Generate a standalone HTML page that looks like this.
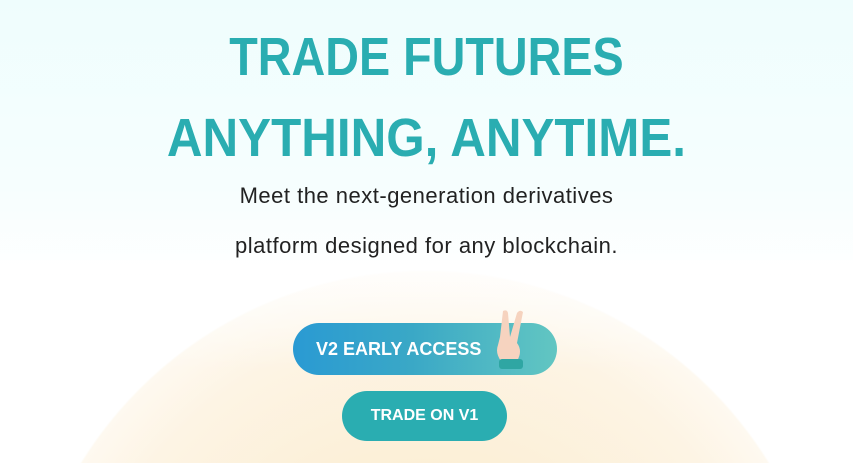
<!DOCTYPE html>
<html><head><style>
html,body{margin:0;padding:0;width:853px;height:463px;overflow:hidden;font-family:"Liberation Sans",sans-serif;}
.wrap{position:relative;width:853px;height:463px;overflow:hidden;background:linear-gradient(#effdfd 0%,#f6fefe 40%,#ffffff 60%);}
.planet{position:absolute;left:0;top:270px;width:853px;height:193px;
background:radial-gradient(circle 405px at 425px 405px,#fbeacb 0%,#fcefd6 50%,#fdf4e4 85%,#fef9f0 99.5%,rgba(255,255,255,0) 100%);}
.fade{position:absolute;left:0;top:260px;width:853px;height:110px;background:linear-gradient(rgba(255,255,255,0.85),rgba(255,255,255,0));}
h1{position:absolute;left:0;width:853px;margin:0;text-align:center;color:#2aadb1;font-weight:bold;font-size:54px;transform:scaleX(0.865);transform-origin:426px 0;}
p{position:absolute;left:0;width:853px;margin:0;text-align:center;color:#222;font-size:22px;letter-spacing:0.5px;}
.v2{position:absolute;left:293px;top:323px;width:264px;height:52px;border-radius:26px;
background:linear-gradient(90deg,#2a9ad3,#3aa8c6 45%,#62c6c2 100%);color:#fff;font-weight:bold;font-size:18px;}
.v2 span{position:absolute;left:23px;top:16px;}
.v1{position:absolute;left:342px;top:391px;width:165px;height:50px;border-radius:25px;background:#2aadb1;color:#fff;font-weight:bold;font-size:16px;text-align:center;line-height:50px;}
</style></head><body><div class="wrap">
<div class="planet"></div>
<div class="fade"></div>
<h1 style="top:26px">TRADE FUTURES</h1>
<h1 style="top:107px;transform:scaleX(0.914)">ANYTHING, ANYTIME.</h1>
<p style="top:183px">Meet the next-generation derivatives</p>
<p style="top:233px">platform designed for any blockchain.</p>
<div class="v2"><span>V2 EARLY ACCESS</span>
<svg style="position:absolute;left:200px;top:-16px" width="40" height="68" viewBox="0 0 40 68">
<path d="M10 4 Q14 2 15 6 L17 30 L24 6 Q27 2 30 5 L24 36 Q30 44 24 54 L8 54 Q2 46 5 38 L7 30 Z" fill="#f6d3bf"/>
<rect x="6" y="52" width="24" height="10" rx="3" fill="#2fa6a3"/>
</svg></div>
<div class="v1">TRADE ON V1</div>
</div></body></html>
